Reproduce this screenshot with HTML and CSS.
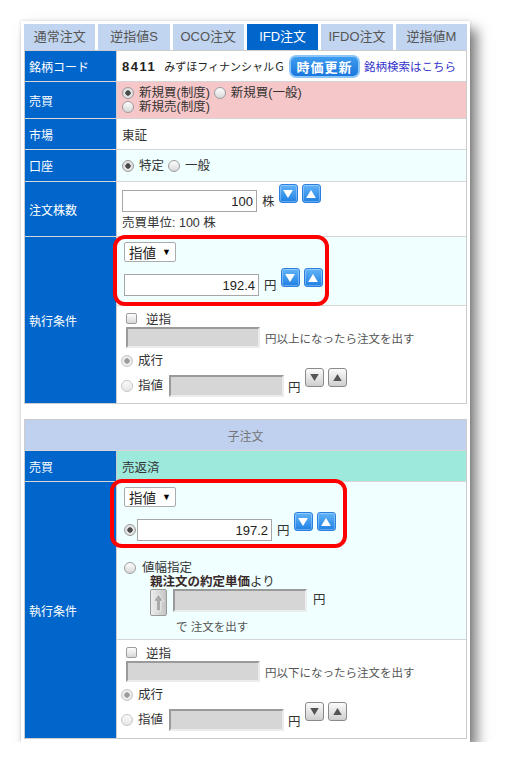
FILE: index.html
```html
<!DOCTYPE html>
<html lang="ja">
<head>
  <meta charset="UTF-8" />
  <meta name="viewport" content="width=device-width, initial-scale=1.0"/>
  <title>IFD注文</title>
  <link rel="stylesheet" href="styles.css">
</head>
<body>

  <div class="panel">
    <ul class="tabs">
      <li>通常注文</li>
      <li>逆指値S</li>
      <li>OCO注文</li>
      <li class="active">IFD注文</li>
      <li>IFDO注文</li>
      <li>逆指値M</li>
    </ul>

    <!-- 親注文 -->
    <div class="form">
      <div class="row row-stock">
        <div class="label">銘柄コード</div>
        <div class="value">
          <span class="code">8411</span>
          <span class="name">みずほフィナンシャルＧ</span>
          <button class="quote">時価更新</button>
          <a href="#" class="search">銘柄検索はこちら</a>
        </div>
      </div>

      <div class="row row-trade">
        <div class="label">売買</div>
        <div class="value pink stack">
          <div class="opts">
            <label class="opt"><input type="radio" name="trade" checked>新規買(制度)</label>
            <label class="opt"><input type="radio" name="trade">新規買(一般)</label>
          </div>
          <div class="opts">
            <label class="opt"><input type="radio" name="trade">新規売(制度)</label>
          </div>
        </div>
      </div>

      <div class="row row-market">
        <div class="label">市場</div>
        <div class="value">東証</div>
      </div>

      <div class="row row-account">
        <div class="label">口座</div>
        <div class="value cyan">
          <label class="opt"><input type="radio" name="account" checked>特定</label>
          <label class="opt"><input type="radio" name="account">一般</label>
        </div>
      </div>

      <div class="row row-qty">
        <div class="label">注文株数</div>
        <div class="value stack qty">
          <div class="entry">
            <input class="num" type="text" value="100">
            <span class="unit">株</span>
            <div class="spins">
              <button class="spin"><svg viewBox="0 0 11 9"><polygon points="0,0 11,0 5.5,9"/></svg></button>
              <button class="spin"><svg viewBox="0 0 11 9"><polygon points="5.5,0 11,9 0,9"/></svg></button>
            </div>
          </div>
          <div class="lot">売買単位: 100 株</div>
        </div>
      </div>

      <div class="row row-exec">
        <div class="label">執行条件</div>
        <div class="value split">
          <div class="sub sub-cyan">
            <span class="select">指値<i>▼</i></span>
            <div class="entry price">
              <input class="num" type="text" value="192.4">
              <span class="unit">円</span>
              <div class="spins">
                <button class="spin"><svg viewBox="0 0 11 9"><polygon points="0,0 11,0 5.5,9"/></svg></button>
                <button class="spin"><svg viewBox="0 0 11 9"><polygon points="5.5,0 11,9 0,9"/></svg></button>
              </div>
            </div>
            <div class="mark mark-parent"></div>
          </div>
          <div class="sub sub-white">
            <label class="chk"><input type="checkbox">逆指</label>
            <div class="trigger">
              <input class="off" type="text" disabled>
              <span class="note">円以上になったら注文を出す</span>
            </div>
            <label class="opt market"><input type="radio" name="p-type" checked disabled>成行</label>
            <div class="limit">
              <input type="radio" name="p-type" disabled>
              <span class="limit-label">指値</span>
              <input class="off" type="text" disabled>
              <span class="unit">円</span>
              <div class="spins">
                <button class="spin gray"><svg viewBox="0 0 11 9"><polygon points="0,0 11,0 5.5,9"/></svg></button>
                <button class="spin gray"><svg viewBox="0 0 11 9"><polygon points="5.5,0 11,9 0,9"/></svg></button>
              </div>
            </div>
          </div>
        </div>
      </div>
    </div>

    <!-- 子注文 -->
    <div class="form">
      <div class="row row-head">子注文</div>

      <div class="row row-close">
        <div class="label">売買</div>
        <div class="value teal">売返済</div>
      </div>

      <div class="row row-exec2">
        <div class="label">執行条件</div>
        <div class="value split">
          <div class="sub sub-cyan child">
            <span class="select">指値<i>▼</i></span>
            <div class="entry price child-price">
              <input type="radio" name="c-mode" checked>
              <input class="num" type="text" value="197.2">
              <span class="unit">円</span>
              <div class="spins">
                <button class="spin"><svg viewBox="0 0 11 9"><polygon points="0,0 11,0 5.5,9"/></svg></button>
                <button class="spin"><svg viewBox="0 0 11 9"><polygon points="5.5,0 11,9 0,9"/></svg></button>
              </div>
            </div>
            <label class="opt width"><input type="radio" name="c-mode">値幅指定</label>
            <div class="base"><b>親注文の約定単価</b>より</div>
            <div class="step-line">
              <button class="step">
                <svg viewBox="0 0 17 27"><path d="M8.5 4 L14.5 12 H11 V23 H6 V12 H2.5 Z"/></svg>
              </button>
              <input class="off" type="text" disabled>
              <span class="unit">円</span>
            </div>
            <div class="note then">で 注文を出す</div>
            <div class="mark mark-child"></div>
          </div>
          <div class="sub sub-white">
            <label class="chk"><input type="checkbox">逆指</label>
            <div class="trigger">
              <input class="off" type="text" disabled>
              <span class="note">円以下になったら注文を出す</span>
            </div>
            <label class="opt market"><input type="radio" name="c-type" checked disabled>成行</label>
            <div class="limit">
              <input type="radio" name="c-type" disabled>
              <span class="limit-label">指値</span>
              <input class="off" type="text" disabled>
              <span class="unit">円</span>
              <div class="spins">
                <button class="spin gray"><svg viewBox="0 0 11 9"><polygon points="0,0 11,0 5.5,9"/></svg></button>
                <button class="spin gray"><svg viewBox="0 0 11 9"><polygon points="5.5,0 11,9 0,9"/></svg></button>
              </div>
            </div>
          </div>
        </div>
      </div>
    </div>
  </div>

</body>
</html>
```

FILE: styles.css
```css
* {
  box-sizing: border-box;
}

body {
  margin: 0;
  background: #fff;
  font-family: "Liberation Sans", "Noto Sans CJK JP", sans-serif;
  font-size: 12.5px;
  color: #333;
}

.panel {
  width: 449px;
  margin: 21px 0 0 21px;
  padding: 3px;
  background: #fff;
  box-shadow: 0 0 3px rgba(0, 0, 0, 0.15), 7px 8px 12px rgba(0, 0, 0, 0.5);
}

/* tabs */
.tabs {
  display: flex;
  gap: 3px;
  margin: 0;
  padding: 0;
  list-style: none;
}

.tabs li {
  flex: 1;
  height: 26px;
  line-height: 26px;
  text-align: center;
  background: #c2d5f0;
  color: #555;
  font-size: 13px;
}

.tabs li.active {
  background: #0066cc;
  color: #fff;
}

/* form table */
.form {
  border: 1px solid #ccc;
}

.form + .form {
  margin-top: 15px;
}

.row {
  display: flex;
}

.row + .row {
  border-top: 1px solid #d6d6d6;
}

.row-stock { height: 30px; }
.row-trade { height: 37px; }
.row-market { height: 31px; }
.row-account { height: 32px; }
.row-qty { height: 55px; }
.row-exec { height: 167px; }
.row-head { height: 30px; }
.row-close { height: 31px; }
.row-exec2 { height: 257px; }

.label {
  flex: none;
  width: 92px;
  display: flex;
  align-items: center;
  padding-left: 4px;
  background: #0066cc;
  color: #fff;
  font-size: 12px;
  border-right: 1px solid #ccc;
}

.value {
  flex: 1;
  display: flex;
  align-items: center;
  padding-left: 5px;
}

.pink { background: #f6c7c8; }
.cyan { background: #f0ffff; }
.teal { background: #9de9dc; }

.stack {
  flex-direction: column;
  align-items: flex-start;
  justify-content: center;
}

/* 銘柄 */
.code {
  font-weight: bold;
  font-size: 13px;
  letter-spacing: 1.5px;
  color: #222;
}

.name {
  margin-left: 8px;
  font-size: 11px;
  color: #222;
}

.quote {
  margin-left: 4px;
  width: 71px;
  height: 23px;
  padding: 0;
  border: 2px solid #8cc6f6;
  border-radius: 7px;
  background: linear-gradient(#3d9cf0, #1a76dc);
  color: #fff;
  font-family: inherit;
  font-size: 13px;
  font-weight: bold;
  letter-spacing: 1px;
}

.search {
  margin-left: 4px;
  font-size: 11.5px;
  color: #3333cc;
  text-decoration: none;
}

/* radios and checkboxes */
input[type="radio"],
input[type="checkbox"] {
  appearance: none;
  flex: none;
  margin: 0;
  width: 12px;
  height: 12px;
  border: 1px solid #9c9c9c;
  background: linear-gradient(#fdfdfd, #d8d8d8);
}

input[type="radio"] {
  border-radius: 50%;
}

input[type="radio"]:checked {
  background: radial-gradient(circle, #4a4a4a 0 2.4px, #e9e9e9 3px, #d2d2d2);
}

input[type="radio"]:disabled {
  border-color: #c6c6c6;
  background: linear-gradient(#fafafa, #e6e6e6);
}

input[type="radio"]:disabled:checked {
  background: radial-gradient(circle, #9a9a9a 0 2.4px, #f0f0f0 3px, #e0e0e0);
}

input[type="checkbox"] {
  width: 11px;
  height: 11px;
  border-radius: 2px;
}

.opts {
  display: flex;
  height: 14px;
  align-items: center;
}

.opt {
  display: inline-flex;
  align-items: center;
  gap: 5px;
  margin-right: 4px;
  line-height: 14px;
}

/* inputs */
.num {
  width: 135px;
  height: 22px;
  padding: 0 3px;
  border: 1px solid #a6a6a6;
  background: #fff;
  text-align: right;
  font-family: "Liberation Sans", sans-serif;
  font-size: 13px;
  color: #222;
}

.off {
  width: 134px;
  height: 21px;
  border: 2px solid;
  border-color: #9a9a9a #ececec #ececec #9a9a9a;
  background: #d6d6d6;
}

.unit {
  margin-left: 5px;
  line-height: 20px;
}

.spins {
  align-self: flex-start;
  display: flex;
  gap: 4px;
  margin-left: 4px;
}

.spin {
  display: flex;
  align-items: center;
  justify-content: center;
  width: 19px;
  height: 19px;
  padding: 0;
  border: 1px solid #2a7fe0;
  border-radius: 3px;
  background: linear-gradient(#62b4f8, #1f80e4);
  box-shadow: inset 0 0 0 1px rgba(255, 255, 255, 0.3);
}

.spin svg {
  width: 10px;
  height: 8px;
  fill: #fff;
}

.spin.gray {
  border-color: #8a8a8a;
  background: linear-gradient(#fbfbfb, #cfcfcf);
  box-shadow: none;
}

.spin.gray svg {
  width: 9px;
  height: 7px;
  fill: #555;
}

.entry {
  display: flex;
  align-items: flex-end;
}

/* 注文株数 */
.qty {
  justify-content: flex-start;
  padding-top: 2px;
}

.qty .entry {
  height: 28px;
}

.lot {
  margin-top: 4px;
  line-height: 14px;
}

/* 執行条件 */
.split {
  flex-direction: column;
  align-items: stretch;
  padding-left: 0;
}

.sub {
  position: relative;
  display: flex;
  flex-direction: column;
  align-items: flex-start;
}

.sub-cyan {
  height: 69px;
  padding: 5px 0 0 7px;
  background: #f0ffff;
  border-bottom: 1px solid #d6d6d6;
}

.sub-cyan.child {
  height: 158px;
}

.sub-white {
  flex: 1;
  padding-left: 4px;
}

.select {
  display: inline-flex;
  align-items: center;
  gap: 6px;
  width: 52px;
  height: 20px;
  padding-left: 4px;
  border: 1px solid #ababab;
  border-radius: 2px;
  background: #fff;
  font-size: 13.5px;
  color: #222;
}

.select i {
  font-style: normal;
  font-size: 9px;
  color: #000;
}

.price {
  height: 28px;
  margin-top: 6px;
}

.child-price {
  height: 29px;
  margin-top: 5px;
}

.child-price input[type="radio"] {
  margin: 0 1px 5px 0;
}

.width {
  margin-top: 20px;
  gap: 6px;
}

.base {
  margin-left: 26px;
  line-height: 14px;
}

.base b {
  color: #3a2a2a;
}

.step-line {
  display: flex;
  align-items: flex-start;
  margin-left: 26px;
}

.step {
  width: 17px;
  height: 27px;
  padding: 0;
  border: 1px solid #9a9a9a;
  border-radius: 2px;
  background: linear-gradient(90deg, #ededed, #c4c4c4);
}

.step svg {
  display: block;
  width: 15px;
  height: 25px;
  fill: #a9a9a9;
  stroke: #f4f4f4;
  stroke-width: 1;
}

.step-line .off {
  width: 134px;
  height: 23px;
  margin-left: 6px;
}

.step-line .unit {
  margin-left: 6px;
  line-height: 23px;
}

.note {
  font-size: 11.5px;
  color: #555;
}

.then {
  margin: 4px 0 0 52px;
  line-height: 14px;
}

.mark {
  position: absolute;
  border: 4px solid #ff0000;
  border-radius: 12px;
  pointer-events: none;
}

.mark-parent {
  left: -4px;
  top: -2px;
  width: 216px;
  height: 71px;
}

.mark-child {
  left: -7px;
  top: -3px;
  width: 237px;
  height: 69px;
}

.chk {
  display: inline-flex;
  align-items: center;
  gap: 9px;
  height: 14px;
  margin: 5px 0 0 5px;
}

.trigger {
  display: flex;
  align-items: center;
  gap: 5px;
  margin: 2px 0 0 5px;
}

.market {
  margin-top: 6px;
}

.limit {
  display: flex;
  align-items: flex-end;
  height: 29px;
}

.limit input[type="radio"] {
  margin-bottom: 5px;
}

.limit-label {
  margin-left: 5px;
  line-height: 22px;
}

.limit .off {
  width: 115px;
  height: 22px;
  margin-left: 6px;
}

.limit .unit {
  margin-left: 4px;
  line-height: 18px;
}

/* 子注文 header */
.row-head {
  justify-content: center;
  align-items: center;
  background: #bfd1ef;
  color: #777;
  font-size: 12px;
}
```
